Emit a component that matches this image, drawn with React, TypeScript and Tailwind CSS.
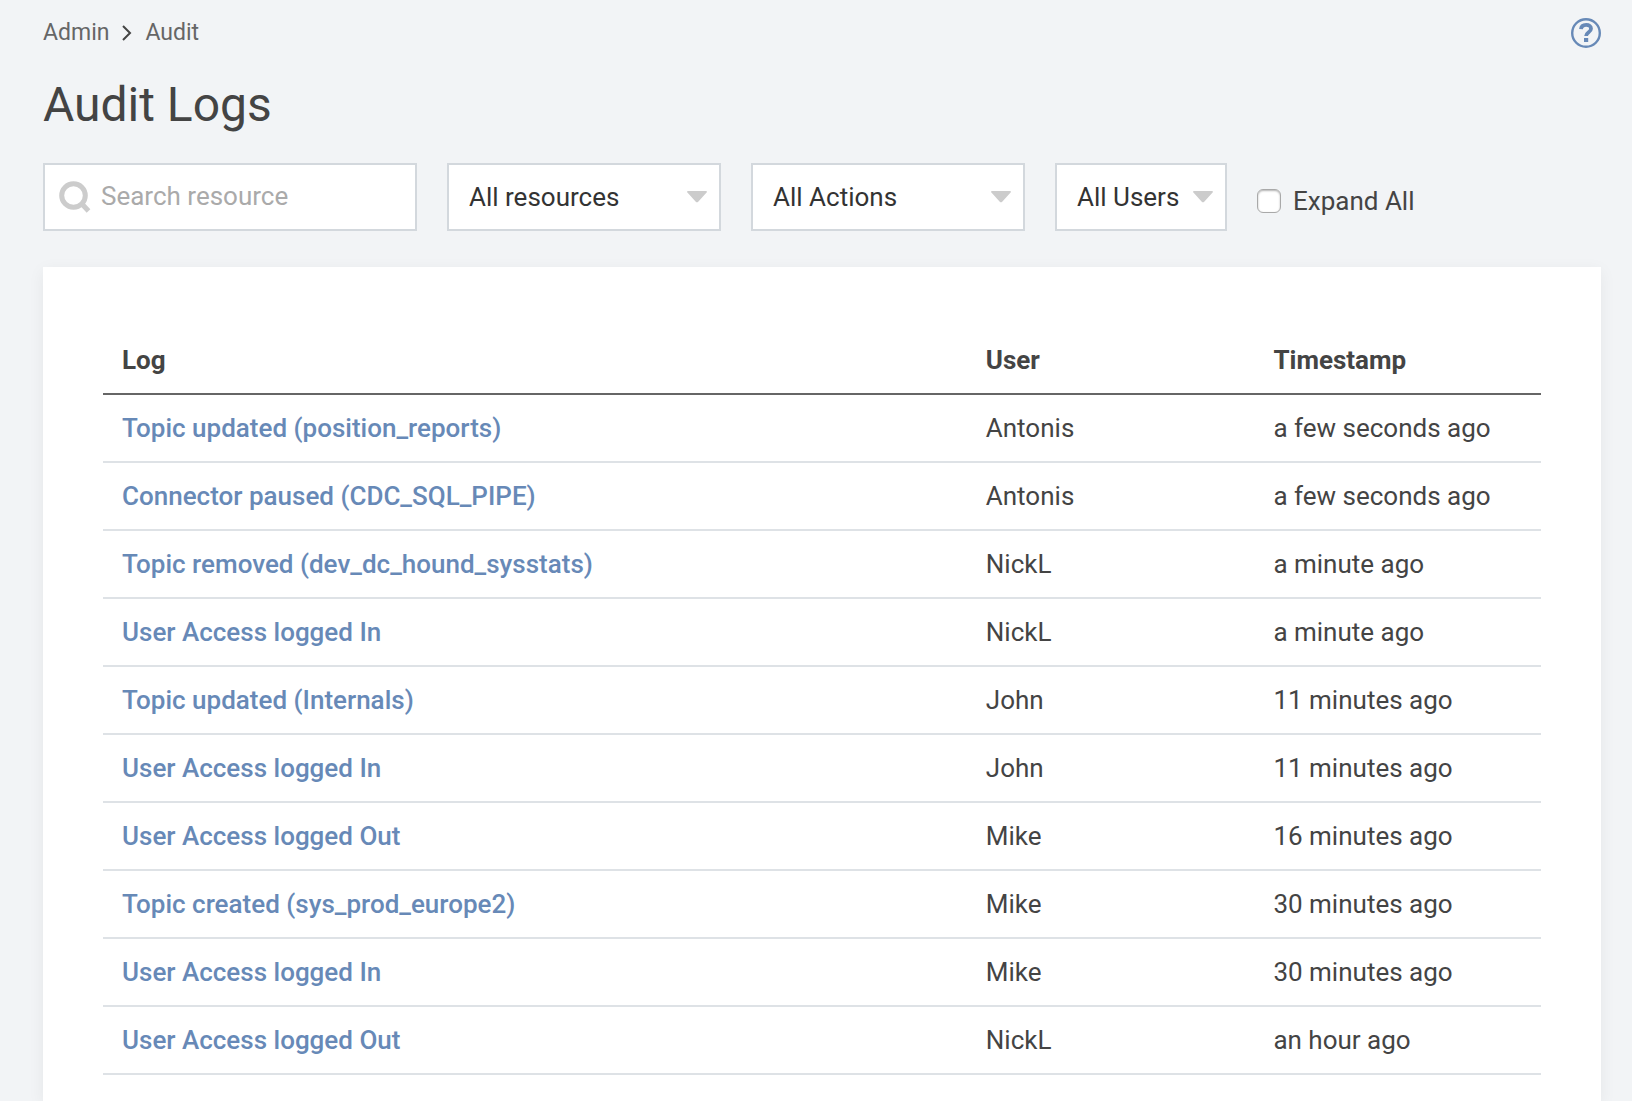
import { useState } from 'react';

interface LogEntry {
  log: string;
  user: string;
  timestamp: string;
}

const logs: LogEntry[] = [
  { log: 'Topic updated (position_reports)', user: 'Antonis', timestamp: 'a few seconds ago' },
  { log: 'Connector paused (CDC_SQL_PIPE)', user: 'Antonis', timestamp: 'a few seconds ago' },
  { log: 'Topic removed (dev_dc_hound_sysstats)', user: 'NickL', timestamp: 'a minute ago' },
  { log: 'User Access logged In', user: 'NickL', timestamp: 'a minute ago' },
  { log: 'Topic updated (Internals)', user: 'John', timestamp: '11 minutes ago' },
  { log: 'User Access logged In', user: 'John', timestamp: '11 minutes ago' },
  { log: 'User Access logged Out', user: 'Mike', timestamp: '16 minutes ago' },
  { log: 'Topic created (sys_prod_europe2)', user: 'Mike', timestamp: '30 minutes ago' },
  { log: 'User Access logged In', user: 'Mike', timestamp: '30 minutes ago' },
  { log: 'User Access logged Out', user: 'NickL', timestamp: 'an hour ago' },
];

interface FilterProps {
  label: string;
  options: string[];
  className: string;
}

function Filter({ label, options, className }: FilterProps) {
  return (
    <div className={`relative ${className}`}>
      <select
        aria-label={label}
        className="w-full h-[68px] pl-5 pr-10 appearance-none bg-white border-2 border-[#d3d8dd] text-[26px] text-[#333333]"
      >
        {options.map(option => (
          <option key={option}>{option}</option>
        ))}
      </select>
      <svg
        viewBox="0 0 20 12"
        className="absolute right-[14px] top-7 w-5 h-3 pointer-events-none"
        fill="#cccccc"
      >
        <path d="M1 0h18c.9 0 1.3.9.6 1.6L11 10.900c-.6.6-1.400.6-2 0L.4 1.600C-.3.900.1 0 1 0z" />
      </svg>
    </div>
  );
}

export default function App() {
  const [search, setSearch] = useState('');
  const [expandAll, setExpandAll] = useState(false);

  return (
    <div className="min-h-screen flex flex-col bg-[#f2f4f6] pl-[43px] pr-[31px] font-[Roboto,sans-serif] text-[#444444]">
      <header className="flex items-center justify-between h-[66px]">
        <nav aria-label="Breadcrumb" className="flex items-center gap-3 text-[23px] text-[#666666]">
          <a href="#admin">Admin</a>
          <svg viewBox="0 0 12 16" className="w-3 h-4" fill="none" stroke="#444444" strokeWidth="2">
            <path d="M2 1l7 7-7 7" />
          </svg>
          <a href="#audit">Audit</a>
        </nav>
        <button aria-label="Help">
          <svg viewBox="0 0 30 30" className="w-[30px] h-[30px]" fill="none" stroke="#6789b7">
            <circle cx="15" cy="15" r="13.8" strokeWidth="2.4" />
            <path
              d="M10 11.200c.2-2.800 2.300-4.300 5.200-4.300 2.900 0 4.800 1.500 4.800 3.800 0 3.600-4.900 3.400-4.900 7.300"
              strokeWidth="3.8"
            />
            <rect x="13" y="20" width="4.200" height="4" fill="#6789b7" stroke="none" />
          </svg>
        </button>
      </header>

      <h1 className="mt-[11px] text-5xl leading-14">Audit Logs</h1>

      <div className="flex flex-wrap items-center gap-[30px] mt-[30px]">
        <div className="relative w-[374px]">
          <svg
            viewBox="0 0 32 32"
            className="absolute left-4 top-[18px] w-8 h-8 pointer-events-none"
            fill="none"
            stroke="#cccccc"
            strokeWidth="5"
          >
            <circle cx="14.500" cy="14.500" r="11.800" />
            <path d="M23 23l6.500 7" />
          </svg>
          <input
            type="text"
            aria-label="Search resource"
            placeholder="Search resource"
            value={search}
            onChange={e => setSearch(e.target.value)}
            className="w-full h-[68px] pl-14 pr-4 pb-0.5 bg-white border-2 border-[#d3d8dd] text-[26px] placeholder:text-[#aaaaaa]"
          />
        </div>
        <Filter label="Resource" options={['All resources']} className="w-[274px]" />
        <Filter label="Action" options={['All Actions']} className="w-[274px]" />
        <Filter label="User" options={['All Users']} className="w-[172px]" />
        <label className="flex items-center gap-3 pt-2 text-[26px]">
          <input
            type="checkbox"
            checked={expandAll}
            onChange={e => setExpandAll(e.target.checked)}
            className="w-6 h-6 appearance-none rounded-md bg-white border border-[#a9a9a9] shadow-[inset_0_1px_2px_rgba(0,0,0,0.3)] checked:bg-[#6789b7]"
          />
          Expand All
        </label>
      </div>

      <main className="flex-1 mt-9 px-[60px] pt-[59px] pb-6 bg-white shadow-[0_4px_16px_rgba(0,0,0,0.06)]">
        <table className="w-full table-fixed text-left text-[26px] leading-9">
          <thead>
            <tr className="h-[68px] border-b-2 border-[#666666]">
              <th className="w-3/5 pl-[19px] font-bold">Log</th>
              <th className="w-1/5 pl-5 font-bold">User</th>
              <th className="w-1/5 pl-5 font-bold">Timestamp</th>
            </tr>
          </thead>
          <tbody>
            {logs.map((entry, i) => (
              <tr key={i} className="h-[68px] border-b-2 border-[#dee2e6]">
                <td className="pl-[19px]">
                  <a href="#log" className="font-medium text-[#6789b7]">{entry.log}</a>
                </td>
                <td className="pl-5">{entry.user}</td>
                <td className="pl-5">{entry.timestamp}</td>
              </tr>
            ))}
          </tbody>
        </table>
      </main>
    </div>
  );
}
